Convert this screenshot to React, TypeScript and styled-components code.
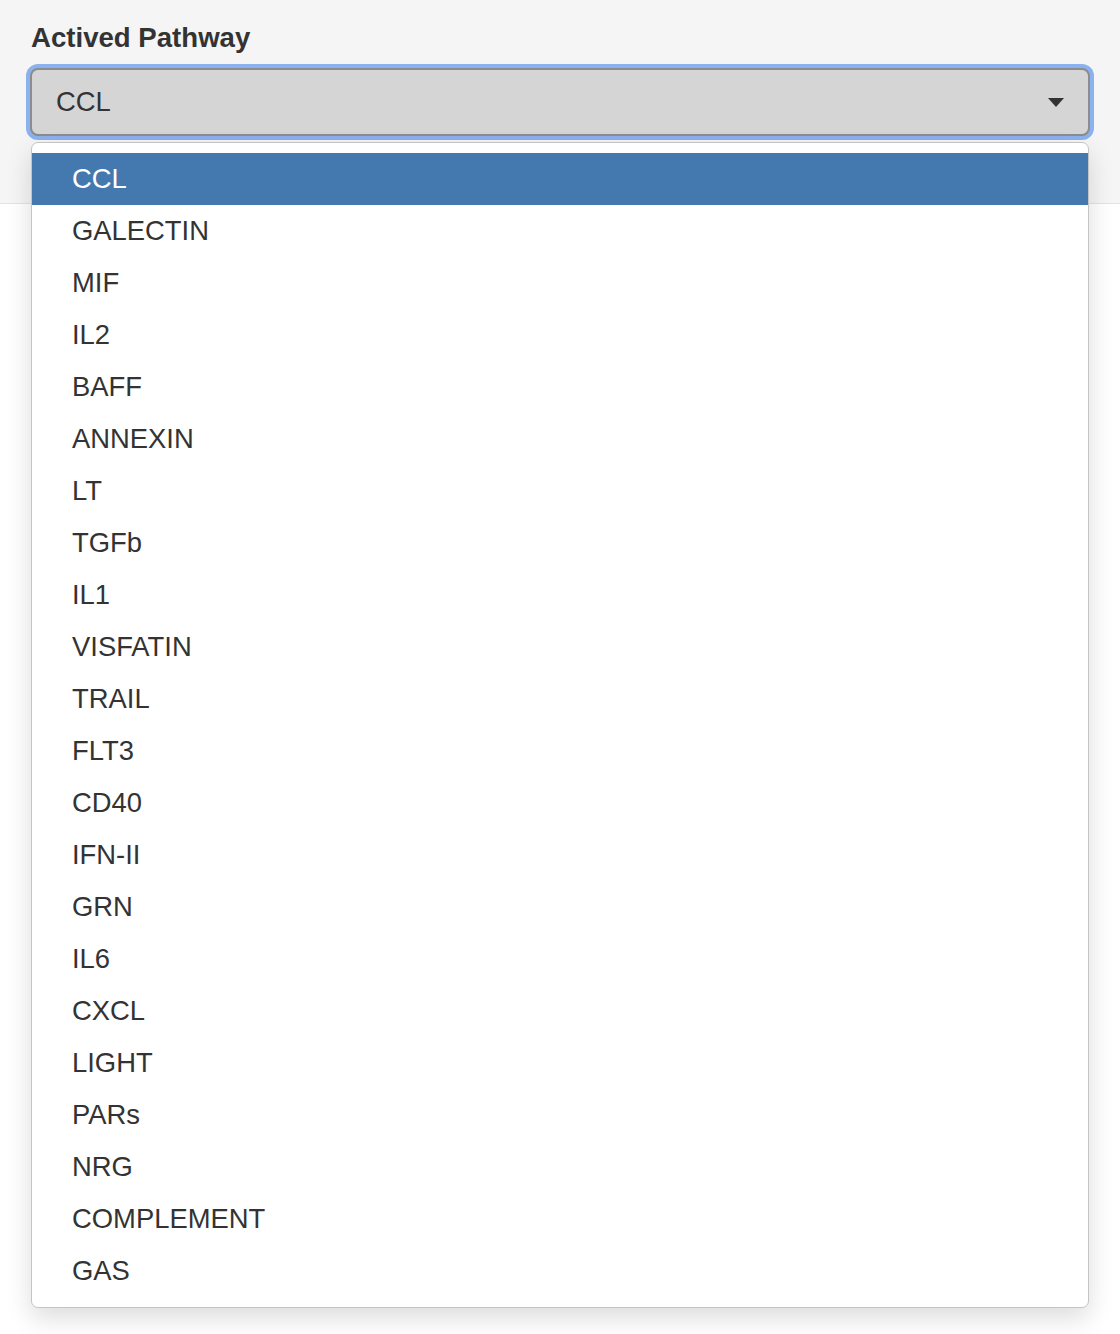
import React, { useState } from 'react';
import styled, { createGlobalStyle } from 'styled-components';

const GlobalStyle = createGlobalStyle`
	html, body {
		margin: 0;
		padding: 0;
		background: #ffffff;
		font-family: 'Liberation Sans', Arial, sans-serif;
		color: #333333;
	}
	* {
		box-sizing: border-box;
	}
`;

const pathways = [
	'CCL',
	'GALECTIN',
	'MIF',
	'IL2',
	'BAFF',
	'ANNEXIN',
	'LT',
	'TGFb',
	'IL1',
	'VISFATIN',
	'TRAIL',
	'FLT3',
	'CD40',
	'IFN-II',
	'GRN',
	'IL6',
	'CXCL',
	'LIGHT',
	'PARs',
	'NRG',
	'COMPLEMENT',
	'GAS'
];

const Page = styled.div`
	position: relative;
	min-height: 1334px;
`;

const Panel = styled.div`
	height: 204px;
	padding: 18px 30px 0 30px;
	background: #f5f5f5;
	border-bottom: 1px solid #e3e3e3;
`;

const Label = styled.label`
	display: block;
	font-size: 27.6px;
	line-height: 40px;
	font-weight: bold;
	color: #333333;
	margin: 0 0 10px 1px;
`;

const SelectBox = styled.div`
	position: relative;
	display: flex;
	align-items: center;
	justify-content: space-between;
	height: 68px;
	padding: 0 24px 0 24px;
	background: #d5d5d5;
	border: 2px solid #8c8c8c;
	border-radius: 8px;
	box-shadow: 0 0 0 4px #8cb1ef;
	font-size: 27.4px;
	color: #333333;
`;

const Caret = styled.svg`
	width: 16px;
	height: 9px;
	margin-top: 1px;
`;

const Menu = styled.ul`
	position: absolute;
	top: 142px;
	left: 31px;
	width: 1058px;
	margin: 0;
	padding: 10px 0;
	list-style: none;
	background: #ffffff;
	border: 1px solid #c4c4c4;
	border-radius: 7px;
	box-shadow: 0 10px 26px rgba(0, 0, 0, 0.14);
`;

const Item = styled.li<{ $active: boolean }>`
	height: 52px;
	display: flex;
	align-items: center;
	padding-left: 40px;
	font-size: 27.4px;
	color: ${p => (p.$active ? '#ffffff' : '#333333')};
	background: ${p => (p.$active ? '#4479b0' : 'transparent')};
`;

const App: React.FC = () => {
	const [selected, setSelected] = useState('CCL');

	return (
		<Page>
			<GlobalStyle />
			<Panel>
				<Label>Actived Pathway</Label>
				<SelectBox>
					<span>{selected}</span>
					<Caret viewBox="0 0 16 9">
						<path d="M0 0 L16 0 L8 9 Z" fill="#333333" />
					</Caret>
				</SelectBox>
			</Panel>
			<Menu>
				{pathways.map(name => (
					<Item key={name} $active={name === selected} onClick={() => setSelected(name)}>
						{name}
					</Item>
				))}
			</Menu>
		</Page>
	);
};

export default App;
